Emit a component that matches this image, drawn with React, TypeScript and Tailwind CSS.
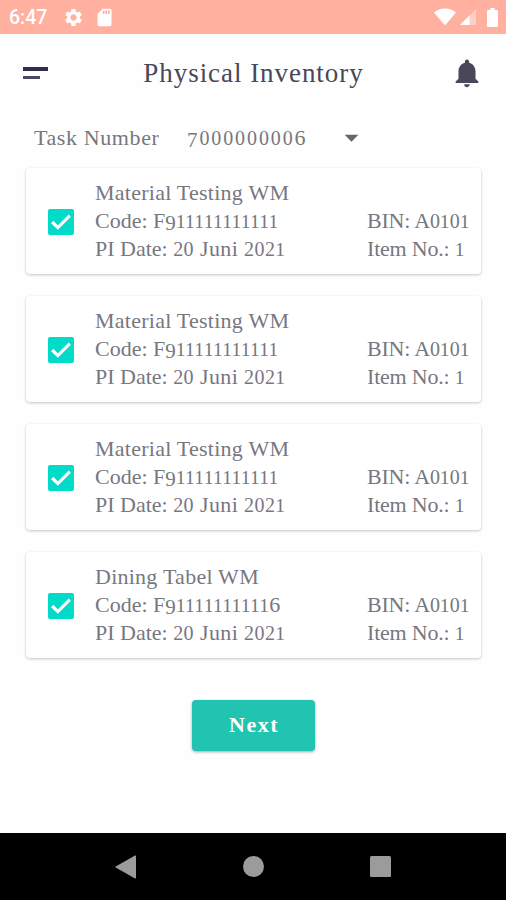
import { useState } from 'react'
import { MdArrowDropDown, MdNotifications, MdSdCard, MdSettings } from 'react-icons/md'

interface InventoryItem {
  id: number
  name: string
  code: string
  date: string
  bin: string
  itemNo: string
}

const ITEMS: InventoryItem[] = [
  { id: 1, name: 'Material Testing WM', code: 'F911111111111', date: '20 Juni 2021', bin: 'A0101', itemNo: '1' },
  { id: 2, name: 'Material Testing WM', code: 'F911111111111', date: '20 Juni 2021', bin: 'A0101', itemNo: '1' },
  { id: 3, name: 'Material Testing WM', code: 'F911111111111', date: '20 Juni 2021', bin: 'A0101', itemNo: '1' },
  { id: 4, name: 'Dining Tabel WM', code: 'F911111111116', date: '20 Juni 2021', bin: 'A0101', itemNo: '1' },
]

// old-style figures: 0-2 are shorter than the capitals, 7 and 9 hang below the baseline
function Figures({ text }: { text: string }) {
  return (
    <>
      {text.split(/([02]+|1+|[79]+)/).map((part, i) => {
        if (/^[02]/.test(part)) {
          return <span key={i} className="text-[20px] leading-none">{part}</span>
        }
        if (/^1/.test(part)) {
          return <span key={i} className="text-[19.5px] leading-none tracking-[0.25px]">{part}</span>
        }
        if (/^[79]/.test(part)) {
          return <span key={i} className="align-[-2px] text-[21px] leading-none">{part}</span>
        }
        return part
      })}
    </>
  )
}

function StatusBar() {
  return (
    <div className="flex h-[34px] items-center bg-[#ffb09f] pr-2 pl-[9px] text-white">
      <span className="w-[54px] pt-[2px] font-[Roboto] text-[19.5px] font-medium leading-none">6:47</span>
      <MdSettings size={21} />
      <MdSdCard size={21} className="ml-[10px]" />
      <svg className="ml-auto" width="22" height="18" viewBox="0 0 22 18" fill="currentColor">
        <path d="M0 4.5C6-.9 16-.9 22 4.5L11.8 16.5Q11 17.4 10.2 16.5Z" />
      </svg>
      <svg className="ml-1" width="16" height="16" viewBox="0 0 16 16" fill="currentColor">
        <path d="M0 16 16 0v16Z" opacity="0.4" />
        <path d="M0 16 9.5 6.5V16Z" />
      </svg>
      <svg className="ml-[11px]" width="11" height="19" viewBox="0 0 11 19" fill="currentColor">
        <path d="M3.2 2V1q0-1 1-1h2.6q1 0 1 1v1H10q1 0 1 1v15q0 1-1 1H1q-1 0-1-1V3q0-1 1-1Z" />
      </svg>
    </div>
  )
}

function Header() {
  return (
    <header className="flex h-[78px] items-center justify-between pr-[22px] pl-[23px] text-[#48485a]">
      <button type="button" aria-label="Menu" className="flex w-[34px] flex-col gap-[5px]">
        <span className="h-[3.5px] w-[25px] bg-[#2f2d50]" />
        <span className="h-[3.5px] w-[17px] bg-[#4b4963]" />
      </button>
      <h1 className="text-[27px] leading-none tracking-[0.95px] whitespace-nowrap">Physical Inventory</h1>
      <button type="button" aria-label="Notifications">
        <MdNotifications size={34} />
      </button>
    </header>
  )
}

interface CardProps {
  item: InventoryItem
  checked: boolean
  onToggle: () => void
}

function ItemCard({ item, checked, onToggle }: CardProps) {
  return (
    <div className="flex h-[106px] rounded-[4px] bg-white pl-[22px] shadow-[0_1px_3px_rgba(0,0,0,0.24)]">
      <button
        type="button"
        role="checkbox"
        aria-checked={checked}
        aria-label={item.name}
        onClick={onToggle}
        className="mt-[41px] mr-[21px] flex size-[26px] shrink-0 items-center justify-center rounded-[2px] bg-[#00dcc8]"
      >
        {checked && (
          <svg width="20" height="16" viewBox="0 0 20 16" fill="none" stroke="white" strokeWidth="3.2">
            <path d="m1.2 8 5.6 5.6L18.8 1.7" />
          </svg>
        )}
      </button>
      <div className="grid w-full grid-cols-[272px_1fr] grid-rows-[28px_28px_28px] content-start pt-[11px] leading-[28px] whitespace-nowrap">
        <div className="col-span-2 tracking-[0.25px]">{item.name}</div>
        <div>
          Code: <Figures text={item.code} />
        </div>
        <div className="tracking-[-0.2px]">
          BIN: <Figures text={item.bin} />
        </div>
        <div>
          PI Date: <span className="tracking-[0.4px]"><Figures text={item.date} /></span>
        </div>
        <div className="tracking-[-0.2px]">
          Item No.: <Figures text={item.itemNo} />
        </div>
      </div>
    </div>
  )
}

function NavBar() {
  return (
    <nav className="flex h-[67px] items-center justify-between bg-black pr-[115px] pl-[115px] text-[#9b9b9b]">
      <svg width="21" height="24" viewBox="0 0 21 24" fill="currentColor">
        <path d="M20 .5q1-.4 1 .7v21.6q0 1.1-1 .7L.7 12.6q-.9-.6 0-1.2Z" />
      </svg>
      <span className="ml-[2px] size-[21px] rounded-full bg-[#9b9b9b]" />
      <span className="size-[21.5px] rounded-[1.5px] bg-[#9b9b9b]" />
    </nav>
  )
}

export default function App() {
  const [unchecked, setUnchecked] = useState<number[]>([])

  function toggle(id: number) {
    setUnchecked((ids) => (ids.includes(id) ? ids.filter((x) => x !== id) : [...ids, id]))
  }

  return (
    <div className="flex h-[900px] w-[506px] flex-col overflow-hidden bg-[#fefefe] font-['Liberation_Serif',serif] text-[22px] text-[#77777f]">
      <StatusBar />
      <Header />
      <div className="flex h-[56px] items-center pb-[5px] pl-[34px]">
        <span className="w-[153px] tracking-[0.6px]">Task Number</span>
        <button type="button" className="flex items-center whitespace-nowrap">
          <span className="w-[148px] text-left tracking-[1.9px]">
            <Figures text="7000000006" />
          </span>
          <MdArrowDropDown size={33} className="text-[#66666a]" />
        </button>
      </div>
      <main className="flex flex-col gap-[22px] pr-[25px] pl-[26px]">
        {ITEMS.map((item) => (
          <ItemCard
            key={item.id}
            item={item}
            checked={!unchecked.includes(item.id)}
            onToggle={() => toggle(item.id)}
          />
        ))}
      </main>
      <button
        type="button"
        className="mt-[42px] h-[51px] w-[123px] self-center rounded-[4px] bg-[#20c4b0] pb-[2px] pl-[2px] text-[22px] font-bold tracking-[1.5px] text-white shadow-[0_1px_3px_rgba(0,0,0,0.35)]"
      >
        Next
      </button>
      <div className="mt-auto">
        <NavBar />
      </div>
    </div>
  )
}
